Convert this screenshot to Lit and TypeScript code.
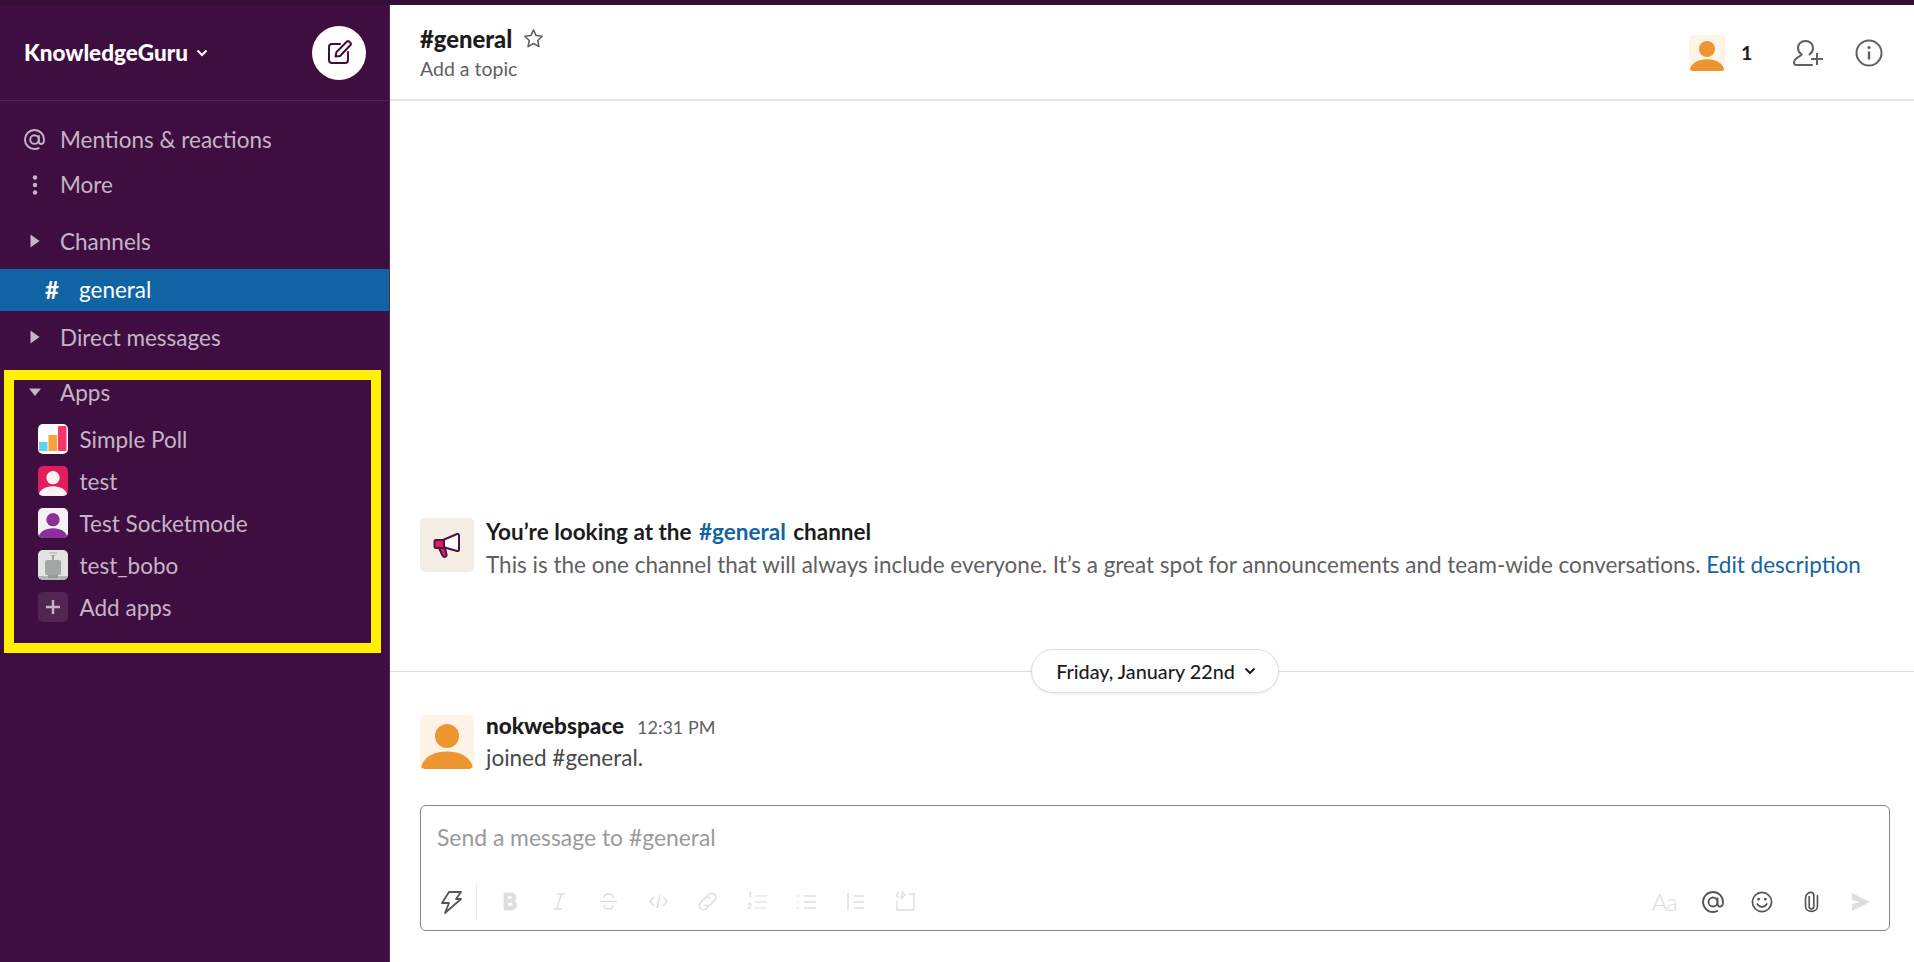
import { LitElement, html, css, svg } from 'lit';
import { customElement } from 'lit/decorators.js';

const person = (bg: string, fg: string) => html`
  <svg class="fill" viewBox="0 0 54 54">
    <rect width="54" height="54" fill=${bg}></rect>
    <circle cx="27" cy="21" r="12" fill=${fg}></circle>
    <path d="M1 54c1-11 12-17.500 26-17.500S52 43 53 54z" fill=${fg}></path>
  </svg>
`;

const toolbarLeft = [
  svg`<path d="M7 4h6.500c3.500 0 5.500 1.700 5.500 4.300 0 1.700-1 3-2.500 3.600 2 .5 3.300 2 3.300 4.200 0 3-2.300 4.900-6 4.900H7zm3.500 2.700v3.900h2.300c1.500 0 2.500-.7 2.500-2s-1-1.900-2.500-1.900zm0 6.500v4.100h2.700c1.700 0 2.800-.7 2.800-2.100s-1.100-2-2.800-2z" fill="currentColor" stroke="currentColor" stroke-width="0.800"/>`,
  svg`<path d="M10 5h8M7 20h8M14.500 5l-5 15"/>`,
  svg`<path d="M4 12.500h17M17 9c0-2.500-2-4-4.500-4S8 6.500 8 9M8 16c0 2.500 2 4 4.500 4s4.500-1.500 4.500-4"/>`,
  svg`<path d="M8 8l-4 4.500 4 4.500M17 8l4 4.500-4 4.500M14 6l-3 13"/>`,
  svg`<path d="M11 8l2.500-2.500a4 4 0 0 1 6 6l-4 4a4 4 0 0 1-6 0M14 17l-2.500 2.500a4 4 0 0 1-6-6l4-4a4 4 0 0 1 6 0"/>`,
  svg`<path d="M10 7h12M10 13h12M10 19h12M4 4l1.500-1v6M3 15.500c1-1.500 3-1 3 .2 0 1.300-3 2.300-3 3.800h3.200" stroke-width="1.200"/>`,
  svg`<path d="M10 7h12M10 13h12M10 19h12M3.500 7h1.500M3.500 13h1.500M3.500 19h1.500" />`,
  svg`<path d="M4 4v17M10 7h10M10 13h10M10 19h10"/>`,
  svg`<path d="M4 12v9h17V5h-5M3 6l3-3M3 6l3 3M12 6L9 9M12 6L9 3M8.200 10L9.800 2" stroke-width="1.300"/>`,
];

@customElement('app-root')
export class AppRoot extends LitElement {
  static styles = css`
    :host {
      display: flex;
      flex-direction: column;
      height: 962px;
      overflow: hidden;
      font-family: Lato, "Liberation Sans", sans-serif;
      color: #1d1c1d;
      background: #fff;
    }

    .topbar {
      height: 5px;
      flex: none;
      background: #350d36;
    }

    .layout {
      flex: 1;
      display: flex;
      min-height: 0;
    }

    /* sidebar */
    .sidebar {
      position: relative;
      width: 390px;
      flex: none;
      box-sizing: border-box;
      background: #3f0e40;
      border-right: 1px solid #522653;
      color: #c6b4c7;
      font-size: 22.500px;
    }

    .team {
      height: 96px;
      box-sizing: border-box;
      display: flex;
      align-items: center;
      justify-content: space-between;
      padding: 0 24px;
      border-bottom: 1px solid #522653;
    }

    .team-name {
      display: flex;
      align-items: center;
      gap: 8px;
      color: #fff;
      font-size: 22.500px;
      font-weight: 900;
    }

    .compose {
      width: 54px;
      height: 54px;
      margin-right: -1px;
      border-radius: 50%;
      background: #fff;
      display: flex;
      align-items: center;
      justify-content: center;
      color: #3f0e40;
    }

    .nav {
      padding-top: 16px;
    }

    .row {
      height: 45px;
      display: flex;
      align-items: center;
      white-space: nowrap;
    }

    .row .lead {
      width: 60px;
      flex: none;
      box-sizing: border-box;
      display: flex;
      justify-content: center;
      padding: 0 15px 0 24px;
    }

    .more {
      margin-bottom: 11px;
    }

    .channels {
      height: 46px;
      margin-bottom: 5px;
    }

    .section {
      height: 42px;
      margin-top: 5px;
    }

    .active {
      height: 42px;
      box-sizing: border-box;
      padding-bottom: 2px;
      background: #1164a3;
      color: #fff;
    }

    .active .hash {
      width: 79px;
      flex: none;
      box-sizing: border-box;
      padding-left: 45px;
      font-size: 24px;
      font-weight: 700;
    }

    .apps {
      margin-top: 13px;
      height: 42px;
      margin-bottom: 5px;
    }

    .app {
      height: 42px;
      display: flex;
      align-items: center;
      gap: 11.500px;
      padding-left: 38px;
    }

    .app-icon {
      width: 30px;
      height: 30px;
      flex: none;
      border-radius: 5px;
      overflow: hidden;
    }

    .add {
      background: #522653;
      display: flex;
      align-items: center;
      justify-content: center;
      color: #c6b4c7;
    }

    .fill {
      display: block;
      width: 100%;
      height: 100%;
    }

    /* the yellow marker drawn over the screenshot */
    .marker {
      position: absolute;
      left: 4px;
      top: 365px;
      width: 377px;
      height: 283px;
      box-sizing: border-box;
      border: 10px solid #fff200;
      pointer-events: none;
    }

    /* main column */
    .main {
      flex: 1;
      min-width: 0;
      display: flex;
      flex-direction: column;
    }

    .header {
      height: 96px;
      flex: none;
      box-sizing: border-box;
      display: flex;
      align-items: center;
      justify-content: space-between;
      padding: 1px 31px 0 30px;
      border-bottom: 2px solid #e6e6e6;
    }

    .title {
      display: flex;
      align-items: center;
      gap: 11px;
      font-size: 23.800px;
      font-weight: 900;
      line-height: 30px;
    }

    .topic {
      font-size: 19.500px;
      line-height: 26px;
      margin-top: 2px;
      color: #616061;
    }

    .actions {
      display: flex;
      align-items: center;
      color: #616061;
    }

    .mini-avatar {
      width: 36px;
      height: 36px;
      border-radius: 4px;
      overflow: hidden;
    }

    .count {
      width: 68px;
      box-sizing: border-box;
      padding-left: 16px;
      font-size: 19.500px;
      font-weight: 700;
      color: #1d1c1d;
    }

    .add-user {
      margin-right: 32px;
    }

    .scroll {
      flex: 1;
      min-height: 0;
      display: flex;
      flex-direction: column;
      justify-content: flex-end;
    }

    .intro {
      display: flex;
      gap: 12px;
      height: 54px;
      padding: 0 30px;
    }

    .square {
      width: 54px;
      height: 54px;
      flex: none;
      border-radius: 5px;
      overflow: hidden;
    }

    .megaphone {
      background: #f4ede4;
      display: flex;
      align-items: center;
      justify-content: center;
    }

    .intro-title {
      font-size: 22.500px;
      font-weight: 700;
      line-height: 26px;
      margin-top: 1px;
    }

    .link {
      color: #1264a3;
    }

    .intro-title .link {
      padding: 0 2px;
    }

    .intro-desc {
      font-size: 22.500px;
      line-height: 30px;
      margin-top: 5px;
      color: #616061;
      font-weight: 400;
      white-space: nowrap;
    }

    .day {
      position: relative;
      display: flex;
      justify-content: center;
      align-items: center;
      height: 44px;
      margin: 77px 0 22px;
    }

    .day::before {
      content: '';
      position: absolute;
      left: 0;
      right: 0;
      top: 22px;
      height: 1px;
      background: #dddddd;
    }

    .pill {
      position: relative;
      display: flex;
      align-items: center;
      gap: 9px;
      height: 44px;
      margin-left: 6px;
      box-sizing: border-box;
      padding: 0 22px 0 24px;
      border: 1px solid #dddddd;
      border-radius: 22px;
      background: #fff;
      font-size: 19.800px;
      font-weight: 500;
      box-shadow: 0 1px 3px rgba(0, 0, 0, 0.08);
    }

    .message {
      display: flex;
      gap: 12px;
      padding: 0 30px;
      height: 54px;
    }

    .msg-head {
      display: flex;
      align-items: baseline;
      gap: 13px;
      line-height: 26px;
      margin-top: -2px;
    }

    .author {
      font-size: 22.500px;
      font-weight: 900;
    }

    .time {
      font-size: 18px;
      color: #616061;
    }

    .msg-body {
      font-size: 22.500px;
      line-height: 30px;
      margin-top: 3px;
      color: #4a494a;
    }

    .composer {
      flex: none;
      margin: 36px 24px 31px 30px;
      height: 126px;
      box-sizing: border-box;
      border: 1px solid #868686;
      border-radius: 6px;
      display: flex;
      flex-direction: column;
      justify-content: space-between;
    }

    .placeholder {
      padding: 16px 16px 0;
      font-size: 22.900px;
      line-height: 30px;
      color: #9a9a9a;
    }

    .tools {
      height: 50px;
      display: flex;
      align-items: center;
      padding: 0 18px 3.500px 18px;
      color: #dddddd;
    }

    .bolt {
      color: #555;
      margin-right: 13px;
    }

    .sep {
      width: 1px;
      height: 35px;
      background: #e6e6e6;
      margin-right: 20px;
    }

    .tool {
      width: 25px;
      height: 25px;
      margin-right: 24.500px;
      fill: none;
      stroke: currentColor;
      stroke-width: 1.500;
    }

    .spacer {
      flex: 1;
    }

    .aa {
      font-size: 24px;
      color: #dddddd;
      font-weight: 300;
      letter-spacing: -1px;
      margin-right: 25px;
    }

    .right-icon {
      color: #555;
    }

    .at {
      margin-right: 27px;
    }

    .smile {
      margin-right: 31px;
    }

    .clip {
      margin-right: 32px;
    }

    .send {
      color: #dddddd;
    }
  `;

  render() {
    return html`
      <div class="topbar"></div>
      <div class="layout">
        ${this._sidebar()}
        <div class="main">
          ${this._header()}
          <div class="scroll">
            ${this._intro()}
            <div class="day">
              <div class="pill">
                Friday, January 22nd
                <svg width="12" height="8" viewBox="0 0 12 8" fill="none" stroke="#1d1c1d" stroke-width="2"><path d="M1.500 1.500L6 6l4.500-4.500"/></svg>
              </div>
            </div>
            <div class="message">
              <div class="square">${person('#fdf3e7', '#ec9531')}</div>
              <div>
                <div class="msg-head"><span class="author">nokwebspace</span><span class="time">12:31 PM</span></div>
                <div class="msg-body">joined #general.</div>
              </div>
            </div>
          </div>
          ${this._composer()}
        </div>
      </div>
    `;
  }

  private _sidebar() {
    const triangle = html`<svg width="12" height="14" viewBox="0 0 12 14"><path d="M1.500 .5L10.500 7l-9 6.500z" fill="currentColor"/></svg>`;
    return html`
      <div class="sidebar">
        <div class="team">
          <div class="team-name">
            KnowledgeGuru
            <svg width="12" height="8" viewBox="0 0 12 8" fill="none" stroke="#fff" stroke-width="2"><path d="M1.500 1.500L6 6l4.500-4.500"/></svg>
          </div>
          <div class="compose">
            <svg width="26" height="26" viewBox="0 0 26 26" fill="none" stroke="currentColor" stroke-width="2" stroke-linejoin="round" stroke-linecap="round">
              <path d="M14 4H6a3 3 0 0 0-3 3v13a3 3 0 0 0 3 3h13a3 3 0 0 0 3-3v-8"/>
              <path d="M9.500 16.500l1-4.500L21 1.500a1.500 1.500 0 0 1 2 0l1.500 1.500a1.500 1.500 0 0 1 0 2L14 16z"/>
            </svg>
          </div>
        </div>
        <div class="nav">
          <div class="row">
            <span class="lead">
              <svg width="21" height="21" viewBox="0 0 22 22" fill="none" stroke="currentColor" stroke-width="2"><circle cx="11" cy="11" r="4.500"/><path d="M15.500 6.500v6c0 2 1 3.200 2.500 3.200s3-1.500 3-4.700c0-5.500-4.500-10-10-10S1 5.500 1 11s4.500 10 10 10c2 0 3.500-.4 5-1.200"/></svg>
            </span>Mentions &amp; reactions
          </div>
          <div class="row more">
            <span class="lead">
              <svg width="6" height="20" viewBox="0 0 6 20"><g fill="currentColor"><circle cx="3" cy="2.500" r="2.200"/><circle cx="3" cy="10" r="2.200"/><circle cx="3" cy="17.500" r="2.200"/></g></svg>
            </span>More
          </div>
          <div class="row channels"><span class="lead">${triangle}</span>Channels</div>
          <div class="row active"><span class="hash">#</span>general</div>
          <div class="row section"><span class="lead">${triangle}</span>Direct messages</div>
          <div class="row apps">
            <span class="lead"><svg width="14" height="10" viewBox="0 0 14 10"><path d="M1 1.500h12L7 9z" fill="currentColor"/></svg></span>Apps
          </div>
          <div class="app">
            <span class="app-icon">
              <svg class="fill" viewBox="0 0 30 30">
                <rect width="30" height="30" fill="#fff"></rect>
                <rect x="1" y="18" width="8.500" height="9" fill="#5ed1f5"></rect>
                <rect x="10.500" y="11" width="8.500" height="16" fill="#fba135"></rect>
                <rect x="20" y="2" width="8.500" height="25" rx="1" fill="#f6366c"></rect>
              </svg>
            </span>Simple Poll
          </div>
          <div class="app"><span class="app-icon">${person('#e01e5a', '#fdf1f5')}</span>test</div>
          <div class="app"><span class="app-icon">${person('#f6f0f8', '#8c2f99')}</span>Test Socketmode</div>
          <div class="app">
            <span class="app-icon">
              <svg class="fill" viewBox="0 0 30 30">
                <rect width="30" height="30" fill="#e2e3e3"></rect>
                <rect y="26" width="30" height="4" fill="#b4b6b6"></rect>
                <rect x="14" y="5" width="2" height="6" fill="#999c9c"></rect>
                <path d="M11 3h8M12.500 5.500h5" stroke="#a8aaaa" stroke-width="1"></path>
                <rect x="7" y="10" width="16" height="15" rx="2" fill="#a3a6a6"></rect>
                <rect x="10" y="25" width="10" height="3" fill="#999c9c"></rect>
              </svg>
            </span>test_bobo
          </div>
          <div class="app">
            <span class="app-icon add">
              <svg width="14" height="14" viewBox="0 0 14 14" stroke="currentColor" stroke-width="2.400"><path d="M7 0v14M0 7h14"/></svg>
            </span>Add apps
          </div>
        </div>
        <div class="marker"></div>
      </div>
    `;
  }

  private _header() {
    return html`
      <div class="header">
        <div>
          <div class="title">
            #general
            <svg width="21" height="21" viewBox="0 0 20 20" fill="none" stroke="#616061" stroke-width="1.500" stroke-linejoin="round"><path d="M10 1.800l2.500 5.400 5.800.7-4.300 4 1.200 5.800L10 14.800l-5.200 2.900L6 11.900l-4.300-4 5.800-.7z"/></svg>
          </div>
          <div class="topic">Add a topic</div>
        </div>
        <div class="actions">
          <div class="mini-avatar">${person('#fdf3e7', '#ec9531')}</div>
          <div class="count">1</div>
          <svg class="add-user" width="30" height="26" viewBox="0 0 30 26" fill="none" stroke="currentColor" stroke-width="2" stroke-linecap="round">
            <path d="M8.500 14.500C6.500 13 5 10.500 5 8c0-4 3-7 7.500-7S20 4 20 8c0 2.500-1.500 5-3.500 6.500"/>
            <path d="M8.500 14.500c-.3 2-7.500 3-7.500 8 0 1.500.8 2.500 2.500 2.500H19"/>
            <path d="M24 13v12M18 19h12" stroke-linecap="butt"/>
          </svg>
          <svg width="28" height="28" viewBox="0 0 28 28" fill="none" stroke="currentColor" stroke-width="2">
            <circle cx="14" cy="14" r="12.500"/>
            <path d="M14 12.500V20.500" stroke-width="2.400"/>
            <circle cx="14" cy="8.500" r="1.600" fill="currentColor" stroke="none"/>
          </svg>
        </div>
      </div>
    `;
  }

  private _intro() {
    return html`
      <div class="intro">
        <div class="square megaphone">
          <svg width="28" height="28" viewBox="0 0 28 28" stroke="#4a154b" stroke-width="2" stroke-linejoin="round">
            <path d="M10 9L24 3c1-.3 2 .2 2 1.500v14c0 1.300-1 1.800-2 1.500L10 16z" fill="#fff"/>
            <path d="M3 9h8v8H3c-1 0-1.500-.5-1.500-1.500v-5C1.500 9.500 2 9 3 9z" fill="#e01e5a"/>
            <path d="M6 17h6l1.500 6.500c.5 2.500-3 3.500-4 1z" fill="#e01e5a"/>
          </svg>
        </div>
        <div>
          <div class="intro-title">You’re looking at the <span class="link">#general</span> channel</div>
          <div class="intro-desc">This is the one channel that will always include everyone. It’s a great spot for announcements and team-wide conversations. <span class="link">Edit description</span></div>
        </div>
      </div>
    `;
  }

  private _composer() {
    return html`
      <div class="composer">
        <div class="placeholder">Send a message to #general</div>
        <div class="tools">
          <svg class="bolt" width="24" height="24" viewBox="0 0 24 24" fill="none" stroke="currentColor" stroke-width="1.800" stroke-linejoin="round">
            <path d="M10 2h12l-5 7h5L6 23l4-10H3z"/>
          </svg>
          <div class="sep"></div>
          ${toolbarLeft.map((p) => html`<svg class="tool" viewBox="0 0 25 25">${p}</svg>`)}
          <div class="spacer"></div>
          <span class="aa">Aa</span>
          <svg class="right-icon at" width="22" height="22" viewBox="0 0 22 22" fill="none" stroke="currentColor" stroke-width="1.800"><circle cx="11" cy="11" r="4.500"/><path d="M15.500 6.500v6c0 2 1 3.200 2.500 3.200s3-1.500 3-4.700c0-5.500-4.500-10-10-10S1 5.500 1 11s4.500 10 10 10c2 0 3.500-.4 5-1.200"/></svg>
          <svg class="right-icon smile" width="22" height="22" viewBox="0 0 23 23" fill="none" stroke="currentColor" stroke-width="1.800"><circle cx="11.500" cy="11.500" r="10"/><path d="M6.500 13.500c1 2 3 3 5 3s4-1 5-3" stroke-linecap="round"/><circle cx="8" cy="8.500" r="1.400" fill="currentColor" stroke="none"/><circle cx="15" cy="8.500" r="1.400" fill="currentColor" stroke="none"/></svg>
          <svg class="right-icon clip" width="15" height="22" viewBox="0 0 16 24" fill="none" stroke="currentColor" stroke-width="1.800" stroke-linecap="round"><path d="M5.500 6v11c0 3.500 5 3.500 5 0V4.500C10.500 1 6 0.800 4 2.500 2.500 3.800 1.500 5 1.500 7v10c0 7 13 7 13 0V5"/></svg>
          <svg class="right-icon send" width="20" height="20" viewBox="0 0 22 22"><path d="M1 1l20 10L1 21v-7.500l9-2.500-9-2.500z" fill="currentColor"/></svg>
        </div>
      </div>
    `;
  }
}
